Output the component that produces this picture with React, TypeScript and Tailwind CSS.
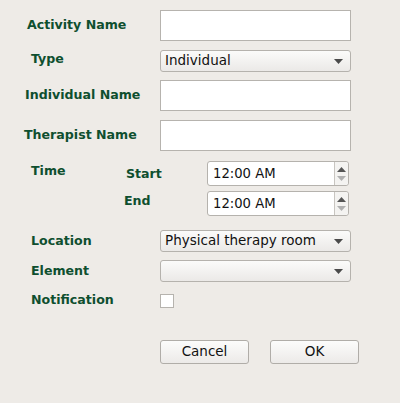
import React from "react";

const F = { fontFamily: '"DejaVu Sans", sans-serif' };

function Label({ children, className = "" }: { children: React.ReactNode; className?: string }) {
  return <div className={"text-[12.6px] font-bold text-[#0e4f2f] leading-none " + className}>{children}</div>;
}

function TextBox() {
  return <div className="w-[191px] h-[31px] bg-white border border-[#b6b3ae]" />;
}

function Arrow({ color = "#4a4a4a" }: { color?: string }) {
  return (
    <svg width="9" height="5" viewBox="0 0 9 5">
      <path d="M0 0 L9 0 L4.5 5 Z" fill={color} />
    </svg>
  );
}

function Select({ value }: { value: string }) {
  return (
    <div className="w-[191px] h-[22px] rounded-[3px] border border-[#b5b2ad] bg-gradient-to-b from-[#fbfbfa] to-[#ebe9e7] flex items-center justify-between pl-[4px] pr-[7px] text-[13.5px] text-[#111] leading-none">
      <span>{value}</span>
      <Arrow />
    </div>
  );
}

function Spin() {
  return (
    <div className="w-[142px] h-[25px] rounded-[3px] border border-[#b5b2ad] bg-white flex">
      <div className="flex-1 flex items-center pl-[5px] text-[13.2px] text-[#111] leading-none">12:00 AM</div>
      <div className="w-[14px] border-l border-[#c8c5c0] bg-[#f4f3f1] flex flex-col items-center justify-center gap-[4px] rounded-r-[3px]">
        <svg width="9" height="5" viewBox="0 0 9 5"><path d="M0 5 L9 5 L4.5 0 Z" fill="#555" /></svg>
        <svg width="9" height="5" viewBox="0 0 9 5"><path d="M0 0 L9 0 L4.5 5 Z" fill="#b0b0b0" /></svg>
      </div>
    </div>
  );
}

function Button({ children }: { children: React.ReactNode }) {
  return (
    <div className="w-[89px] h-[24px] rounded-[3px] border border-[#b0ada8] bg-gradient-to-b from-[#fcfcfb] to-[#eceae8] flex items-center justify-center text-[13.5px] text-[#111] leading-none">
      {children}
    </div>
  );
}

export default function App() {
  return (
    <div style={F} className="w-[400px] h-[403px] bg-[#eeebe7] flex flex-col pt-[10px]">
      <div className="flex h-[31px] items-center">
        <div className="w-[160px] pl-[27px]"><Label>Activity Name</Label></div>
        <TextBox />
      </div>
      <div className="flex h-[22px] items-center mt-[9px]">
        <div className="w-[160px] pl-[31px] -mt-[4px]"><Label>Type</Label></div>
        <Select value="Individual" />
      </div>
      <div className="flex h-[31px] items-center mt-[8px]">
        <div className="w-[160px] pl-[25px]"><Label>Individual Name</Label></div>
        <TextBox />
      </div>
      <div className="flex h-[31px] items-center mt-[9px]">
        <div className="w-[160px] pl-[24px]"><Label>Therapist Name</Label></div>
        <TextBox />
      </div>
      <div className="flex mt-[10px]">
        <div className="w-[95px] pl-[31px] pt-[4px]"><Label>Time</Label></div>
        <div className="flex flex-col gap-[5px]">
          <div className="flex h-[25px] items-center">
            <div className="w-[112px] pl-[31px] mt-[2px]"><Label>Start</Label></div>
            <Spin />
          </div>
          <div className="flex h-[25px] items-center">
            <div className="w-[112px] pl-[29px] -mt-[4px]"><Label>End</Label></div>
            <Spin />
          </div>
        </div>
      </div>
      <div className="flex h-[22px] items-center mt-[14px]">
        <div className="w-[160px] pl-[31px]"><Label>Location</Label></div>
        <Select value="Physical therapy room" />
      </div>
      <div className="flex h-[22px] items-center mt-[8px]">
        <div className="w-[160px] pl-[31px]"><Label>Element</Label></div>
        <Select value="" />
      </div>
      <div className="flex h-[13px] items-center mt-[12px]">
        <div className="w-[160px] pl-[31px]"><Label>Notification</Label></div>
        <div className="w-[14px] h-[14px] bg-white border border-[#b6b3ae]" />
      </div>
      <div className="flex mt-[33px] pl-[160px] gap-[21px]">
        <Button>Cancel</Button>
        <Button>OK</Button>
      </div>
    </div>
  );
}
